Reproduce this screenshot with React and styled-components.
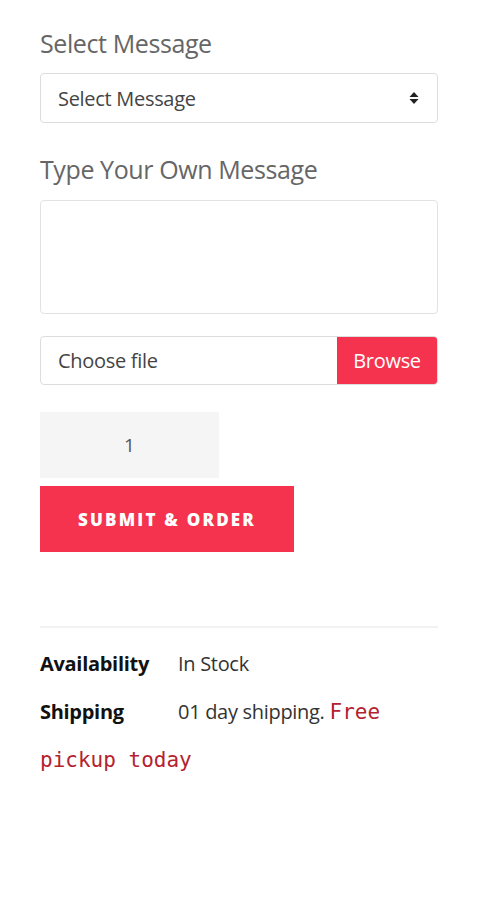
import React from 'react'
import styled, { createGlobalStyle } from 'styled-components'

const Global = createGlobalStyle`
  body {
    margin: 0;
    background: #fff;
    font-family: "Open Sans", "Noto Sans", sans-serif;
  }
`

export default function App() {
  return (
    <Page>
      <Global />
      <Label>Select Message</Label>
      <SelectBox>
        <span>Select Message</span>
        <svg width="10" height="14" viewBox="0 0 10 14">
          <path d="M5 1 L9.5 6 H0.5 Z" fill="#222" />
          <path d="M5 13 L9.5 8 H0.5 Z" fill="#222" />
        </svg>
      </SelectBox>

      <Label top={29}>Type Your Own Message</Label>
      <TextBox />

      <FileRow>
        <FileText>Choose file</FileText>
        <Browse>Browse</Browse>
      </FileRow>

      <Qty>1</Qty>
      <Submit>SUBMIT &amp; ORDER</Submit>

      <Divider />

      <InfoList>
        <Info>
          <Key>Availability</Key>In Stock
        </Info>
        <Info>
          <Key>Shipping</Key>01 day shipping. <Code>Free pickup today</Code>
        </Info>
      </InfoList>
    </Page>
  )
}

const Page = styled.div`
  width: 398px;
  padding: 26px 40px 40px;
  display: flex;
  flex-direction: column;
  align-items: flex-start;
`
const Label = styled.div`
  margin-top: ${p => p.top || 0}px;
  font-size: 25px;
  line-height: 34px;
  color: #666;
  letter-spacing: -0.4px;
`
const SelectBox = styled.div`
  box-sizing: border-box;
  margin-top: 13px;
  width: 100%;
  height: 50px;
  border: 1px solid #ddd;
  border-radius: 4px;
  display: flex;
  align-items: center;
  justify-content: space-between;
  padding: 0 18px 0 17px;
  font-size: 20px;
  color: #444;
  letter-spacing: -0.3px;
`
const TextBox = styled.div`
  box-sizing: border-box;
  margin-top: 14px;
  width: 100%;
  height: 114px;
  border: 1px solid #e2e2e2;
  border-radius: 4px;
`
const FileRow = styled.div`
  box-sizing: border-box;
  margin-top: 22px;
  width: 100%;
  height: 49px;
  border: 1px solid #ddd;
  border-radius: 4px;
  display: flex;
  overflow: hidden;
`
const FileText = styled.div`
  flex: 1;
  display: flex;
  align-items: center;
  padding-left: 17px;
  font-size: 20px;
  color: #444;
  letter-spacing: -0.3px;
`
const Browse = styled.div`
  width: 100px;
  background: #f5334f;
  color: #fff;
  font-size: 20px;
  display: flex;
  align-items: center;
  justify-content: center;
  letter-spacing: -0.3px;
`
const Qty = styled.div`
  margin-top: 27px;
  width: 179px;
  height: 66px;
  background: #f5f5f5;
  display: flex;
  align-items: center;
  justify-content: center;
  font-size: 19px;
  color: #555;
`
const Submit = styled.div`
  margin-top: 8px;
  width: 254px;
  height: 66px;
  background: #f5334f;
  color: #fff;
  font-size: 17px;
  font-weight: 800;
  letter-spacing: 2.2px;
  display: flex;
  align-items: center;
  justify-content: center;
`
const Divider = styled.div`
  margin-top: 74px;
  width: 100%;
  height: 2px;
  background: #f2f2f2;
`
const InfoList = styled.div`
  margin-top: 12px;
  width: 100%;
`
const Info = styled.div`
  font-size: 20px;
  line-height: 48px;
  color: #333;
  letter-spacing: -0.3px;
`
const Key = styled.span`
  display: inline-block;
  width: 138px;
  font-weight: 700;
  color: #111;
`
const Code = styled.code`
  font-family: "DejaVu Sans Mono", "Liberation Mono", monospace;
  font-size: 21px;
  color: #b5222f;
  letter-spacing: 0;
`
